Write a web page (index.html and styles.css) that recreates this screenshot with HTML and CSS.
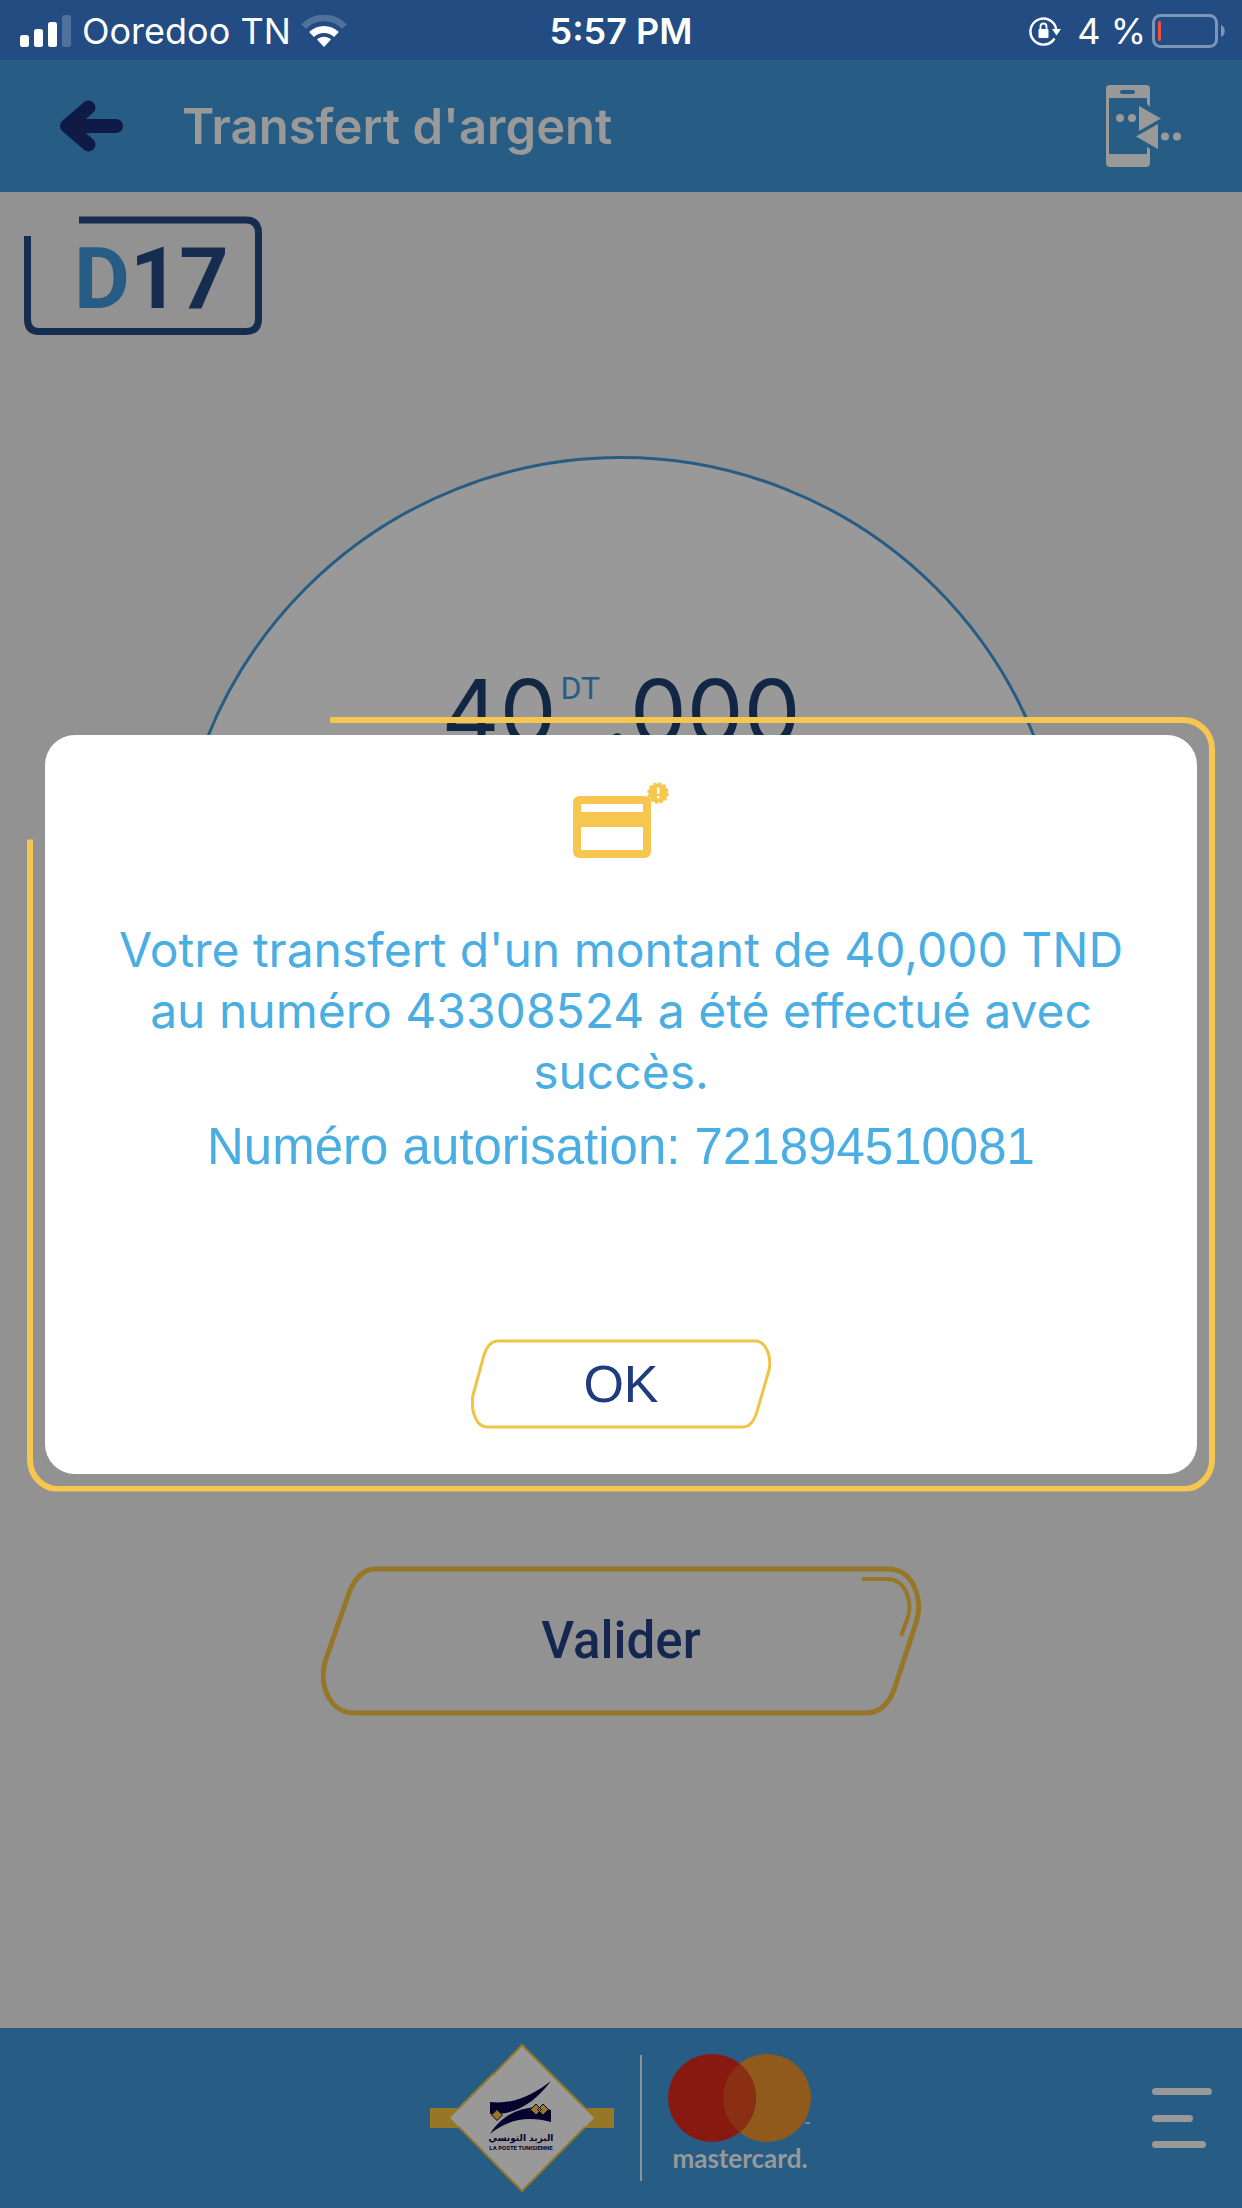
FILE: index.html
```html
<!DOCTYPE html>
<html lang="fr">
<head>
<meta charset="utf-8">
<meta name="viewport" content="width=device-width, initial-scale=1">
<title>Transfert d'argent</title>
<link rel="stylesheet" href="styles.css">
</head>
<body>
<div class="app">
  <div class="status">
    <div class="status-left">
      <svg width="56" height="34" viewBox="-4 0 56 34" aria-hidden="true">
        <g fill="#fff"><rect y="21" width="9" height="12" rx="2.5"/><rect x="14" y="15" width="9" height="18" rx="2.5"/><rect x="28" y="8" width="9" height="25" rx="2.5"/></g>
        <rect x="42" y="1" width="9" height="32" rx="2.5" fill="#4f719c"/>
      </svg>
      <span>Ooredoo TN</span>
      <svg class="wifi" width="46" height="34" viewBox="0 0 46 34" aria-hidden="true">
        <path d="M2.500 12.500a29 29 0 0 1 41 0" fill="none" stroke="#4f719c" stroke-width="6.500"/>
        <path d="M10.500 20.500a18 18 0 0 1 25 0" fill="none" stroke="#fff" stroke-width="7"/>
        <path d="M23 33l-7-7.500c4-3.700 10-3.700 14 0z" fill="#fff"/>
      </svg>
    </div>
    <span class="status-time">5:57 PM</span>
    <div class="status-right">
      <svg class="lock" width="32" height="30" viewBox="0 0 32 30" fill="none" stroke="#fff" aria-hidden="true">
        <path d="M25.500 22.500a13 13 0 1 1 1.700-9.500" stroke-width="2.400"/>
        <path d="M23 13h9l-4.500 6.500z" fill="#fff" stroke="none"/>
        <rect x="9.500" y="13" width="10" height="9" rx="1" fill="#fff" stroke="none"/>
        <path d="M11.500 13.500v-3a3 3 0 0 1 6 0v3" stroke-width="1.800"/>
      </svg>
      <span>4 %</span>
      <svg width="74" height="36" viewBox="0 0 74 36" aria-hidden="true">
        <rect x="1.500" y="2.500" width="63" height="31" rx="7" fill="none" stroke="#7c96b8" stroke-width="3"/>
        <rect x="6" y="8" width="3" height="20" rx="1.500" fill="#ef5043"/>
        <path d="M69 12c5 2 5 10 0 12z" fill="#7c96b8"/>
      </svg>
    </div>
  </div>

  <header class="header">
    <button class="icon-button" aria-label="Retour">
      <svg width="64" height="52" viewBox="0 0 64 52" aria-hidden="true">
        <path d="M56 26H12M28.500 7.500L7 26L28.500 44.500" fill="none" stroke="#0f1a47" stroke-width="14" stroke-linecap="round" stroke-linejoin="round"/>
      </svg>
    </button>
    <h1 class="title">Transfert d'argent</h1>
    <button class="icon-button" aria-label="Transferts">
      <svg width="76" height="83" viewBox="0 0 76 83" fill="#999" aria-hidden="true">
        <path fill-rule="evenodd" d="M4 0H40Q44 0 44 4V22L41 19V13H3V69H41V62L44 64V78Q44 82 40 82H4Q0 82 0 78V4Q0 0 4 0ZM16 5Q14 5 14 7T16 9H27Q29 9 29 7T27 5Z"/>
        <path d="M33 21L55 33.500L33 46ZM52 39V64L30 51.500Z"/>
        <circle cx="14" cy="33" r="4"/><circle cx="26" cy="33" r="4"/>
        <circle cx="59" cy="51.500" r="4"/><circle cx="71" cy="51.500" r="4"/>
      </svg>
    </button>
  </header>

  <main class="main">
    <div class="brand">
      <svg width="238" height="120" viewBox="0 0 238 120" role="img" aria-label="D17">
        <path d="M55 4H222Q234.500 4 234.500 17V103Q234.500 115.500 222 115.500H15Q3.500 115.500 3.500 103V20" fill="none" stroke="#162d50" stroke-width="7"/>
        <text class="brand-name" x="50" y="92"><tspan fill="#275d84">D</tspan><tspan fill="#162d50">17</tspan></text>
      </svg>
    </div>
    <div class="dial">
      <p class="amount"><span>40</span><span class="unit">DT</span><span class="dot">.</span><span>000</span></p>
    </div>
    <button class="submit">
      <svg class="outline" viewBox="0 0 600 150" fill="none" stroke="#967728" aria-hidden="true">
        <path stroke-width="5" d="M55 3H567C591 3 603 31 595 57L573 124C567 139 558 147 545 147H33C10 147 -4 120 5 93L28 27C34 11 43 3 55 3Z"/>
        <path stroke-width="4" d="M541 13H566C584 13 593 35 586 54L580 70"/>
      </svg>
      <span>Valider</span>
    </button>
  </main>

  <footer class="footer">
    <div class="partners">
      <svg width="184" height="148" viewBox="0 0 184 148" role="img" aria-label="La Poste Tunisienne">
        <rect y="64" width="184" height="20" fill="#967728"/>
        <path d="M92 1L164 74L92 147L20 74Z" fill="#999" />
        <path d="M63 31L92 1L155 64M29 83L92 147L155 83M29 64L64 29" fill="none" stroke="#967728" stroke-width="2"/>
        <path d="M60 58C84 61 104 50 121 37C105 58 87 71 60 70ZM60 90C75 66 101 59 121 66V78C96 71 75 77 60 90Z" fill="#05022b"/>
        <g fill="#967728" stroke="#05022b"><path d="M67 65.500L72.500 71L67 76.500L61.500 71ZM106 60L111.500 65.500L106 71L100.500 65.500ZM113 60L118.500 65.500L113 71L107.500 65.500Z"/></g>
        <text class="post-ar" x="91" y="97">البريد التونسي</text>
        <text class="post-fr" x="91" y="106">LA POSTE TUNISIENNE</text>
      </svg>
      <span class="divider"></span>
      <div class="mastercard">
        <svg width="144" height="90" viewBox="0 0 144 90" aria-hidden="true">
          <circle cx="99" cy="45" r="44" fill="#8f5a1b"/>
          <circle cx="44" cy="45" r="44" fill="#881911"/>
          <path d="M71.500 10.700A44 44 0 0 1 71.500 79.300A44 44 0 0 1 71.500 10.700Z" fill="#8b2f14"/>
          <path d="M137 70h5" stroke="#999" stroke-width="1.500"/>
        </svg>
        <span>mastercard.</span>
      </div>
    </div>
    <button class="icon-button menu" aria-label="Menu">
      <svg width="60" height="60" viewBox="0 0 60 60" fill="#999" aria-hidden="true">
        <rect width="60" height="7" rx="3.500"/><rect y="27" width="41" height="7" rx="3.500"/><rect y="53" width="54" height="7" rx="3.500"/>
      </svg>
    </button>
  </footer>
</div>

<div class="overlay">
  <div class="frame" role="dialog" aria-modal="true" aria-label="Confirmation">
    <div class="dialog">
      <svg class="card-icon" width="96" height="76" viewBox="0 0 96 76" fill="#f6c64f" aria-hidden="true">
        <path fill-rule="evenodd" d="M7 14H71Q78 14 78 21V69Q78 76 71 76H7Q0 76 0 69V21Q0 14 7 14ZM8 22V30H70V22ZM8 45V68H70V45Z"/>
        <circle cx="85" cy="11" r="9.500"/>
        <circle cx="85" cy="11" r="9.500" fill="none" stroke="#f6c64f" stroke-width="2.500" stroke-dasharray="3 1.974"/>
        <path d="M84 5.500h2.500v6.500h-2.500zM84 14h2.500v2.500h-2.500z" fill="#fff"/>
      </svg>
      <p class="message">Votre transfert d'un montant de 40,000 TND au numéro 43308524 a été effectué avec succès.</p>
      <p class="reference">Numéro autorisation: 721894510081</p>
      <button class="ok">
        <svg class="outline" viewBox="0 0 300 90" fill="none" stroke="#f0c344" stroke-width="3" aria-hidden="true">
          <path d="M27 2H284C295 2 301 18 298 31L287 69C284 81 279 88 272 88H16C6 88 -1 73 2 56L13 16C16 7 21 2 27 2Z"/>
        </svg>
        <span>OK</span>
      </button>
    </div>
  </div>
</div>
</body>
</html>
```
FILE: styles.css
```css
* {
  box-sizing: border-box;
}

body {
  margin: 0;
  background: #929292;
  font-family: Inter, "Liberation Sans", sans-serif;
}

h1,
p {
  margin: 0;
}

svg {
  display: block;
}

button {
  padding: 0;
  border: 0;
  background: none;
  cursor: pointer;
}

.app {
  display: flex;
  flex-direction: column;
  min-height: 100vh;
}

/* Status bar */
.status {
  display: grid;
  grid-template-columns: 1fr auto 1fr;
  align-items: center;
  height: 60px;
  padding: 2px 16px 0;
  background: #234c82;
  color: #fff;
  font-size: 36px;
}

.status-left,
.status-right {
  display: flex;
  align-items: center;
}

.status-left {
  gap: 10px;
}

.status-right {
  justify-content: flex-end;
  gap: 6px;
}

.lock {
  margin-right: 10px;
}

.status-time {
  font-weight: 600;
}

/* Header */
.header {
  display: flex;
  align-items: center;
  height: 132px;
  padding: 0 60px;
  background: #275d84;
}

.title {
  flex: 1;
  padding-left: 58px;
  color: #999;
  font-size: 49px;
  font-weight: 600;
}

/* Content */
.main {
  display: flex;
  flex: 1;
  flex-direction: column;
  align-items: center;
}

.brand {
  align-self: flex-start;
  padding: 24px 24px 0;
}

.brand-name {
  font-family: Roboto, sans-serif;
  font-size: 86px;
  font-weight: 700;
}

.dial {
  width: 72%;
  margin-top: 120px;
  padding-top: 197px;
  aspect-ratio: 1;
  border: 3px solid #275d84;
  border-radius: 50%;
  background: #999;
}

.amount {
  display: flex;
  justify-content: center;
  color: #122743;
  font-size: 90px;
  line-height: 112px;
}

.unit {
  padding: 0 4px;
  color: #275d84;
  font-family: Roboto, sans-serif;
  font-size: 32px;
  line-height: 64px;
}

.submit,
.ok {
  position: relative;
}

.submit {
  width: 600px;
  max-width: 90%;
  height: 150px;
  margin-top: 216px;
  color: #152650;
  font: 500 51px/60px Roboto, sans-serif;
}

.outline {
  position: absolute;
  inset: 0;
  width: 100%;
  height: 100%;
}

/* Footer */
.footer {
  display: grid;
  grid-template-columns: 1fr auto 1fr;
  align-items: center;
  height: 180px;
  padding: 0 30px;
  background: #275d84;
}

.partners {
  display: flex;
  grid-column: 2;
  align-items: center;
  gap: 26px;
}

.post-ar,
.post-fr {
  fill: #05022b;
  font-weight: 700;
  text-anchor: middle;
}

.post-ar {
  font-family: "DejaVu Sans", sans-serif;
  font-size: 9px;
}

.post-fr {
  font-family: Roboto, sans-serif;
  font-size: 6px;
}

.divider {
  width: 2px;
  height: 126px;
  background: #8b9397;
}

.mastercard {
  display: flex;
  flex-direction: column;
  align-items: center;
  padding-bottom: 10px;
  color: #999;
  font: 700 26px/30px Lato, sans-serif;
}

.menu {
  justify-self: end;
}

/* Confirmation dialog */
.overlay {
  position: fixed;
  inset: 0;
  display: flex;
  align-items: center;
  justify-content: center;
  padding: 0 27px;
}

.frame {
  position: relative;
  width: 100%;
  padding: 18px;
}

.frame::before {
  position: absolute;
  inset: 0;
  border: 6px solid #f6c64f;
  border-radius: 32px;
  clip-path: polygon(303px 0, 100% 0, 100% 100%, 0 100%, 0 123px, 303px 123px);
  content: "";
}

.dialog {
  position: relative;
  display: flex;
  flex-direction: column;
  align-items: center;
  padding: 47px 60px 45px;
  border-radius: 30px;
  background: #fff;
  color: #4aaee3;
  text-align: center;
}

.message {
  margin-top: 61px;
  font-size: 48px;
  line-height: 61px;
}

.reference {
  margin-top: 15px;
  font: 51px/60px "Liberation Sans", Arial, sans-serif;
}

.ok {
  width: 300px;
  height: 90px;
  margin-top: 162px;
  color: #1f3c80;
  font: 52px/60px "Liberation Sans", Arial, sans-serif;
}
```
